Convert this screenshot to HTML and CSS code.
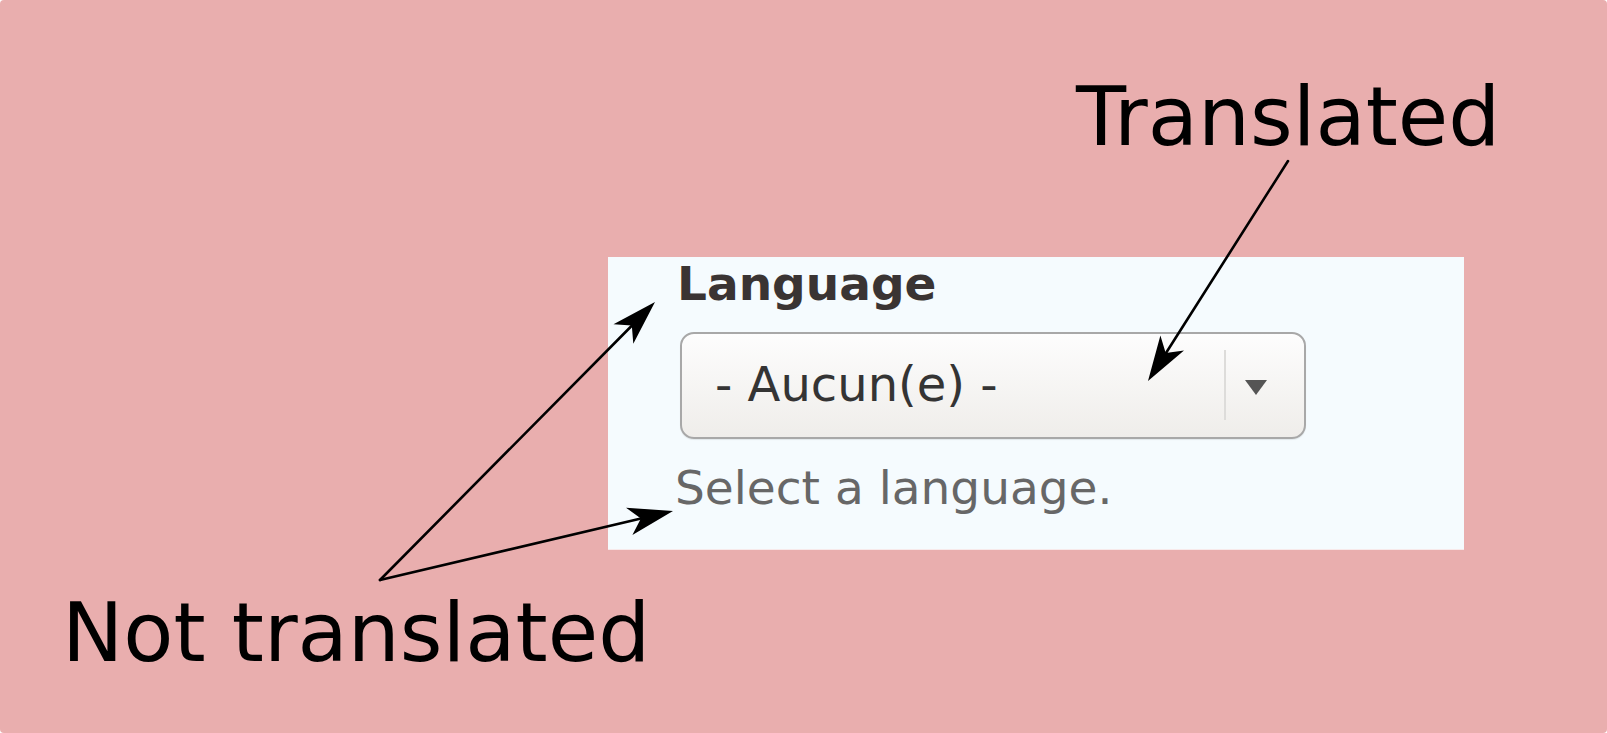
FILE: index.html
```html
<!DOCTYPE html>
<html>
<head>
<meta charset="utf-8">
<link rel="stylesheet" href="styles.css">
</head>
<body>
<div class="canvas">
  <div class="panel">
    <div class="label">Language</div>
    <div class="select">
      <span class="select-value">- Aucun(e) -</span>
      <span class="select-sep"></span>
      <span class="select-arrow"></span>
    </div>
    <div class="desc">Select a language.</div>
  </div>
  <div class="note note-translated">Translated</div>
  <div class="note note-not">Not translated</div>
  <svg class="arrows" width="1607" height="733" viewBox="0 0 1607 733">
    <g stroke="#000" stroke-width="2.6" fill="none" stroke-linecap="round">
      <line x1="1288" y1="161" x2="1166" y2="353"/>
      <line x1="380" y1="580" x2="632" y2="325.5"/>
      <line x1="380" y1="580" x2="641" y2="518.6"/>
    </g>
    <g fill="#000">
      <path d="M1148 381 L1160.4 335.5 L1165.7 353.1 L1184 350.5 Z"/>
      <path d="M655 302 L613.5 324.2 L631.8 325.5 L633.3 343.8 Z"/>
      <path d="M673 511 L626 507.7 L640.9 518.6 L632.4 534.9 Z"/>
    </g>
  </svg>
</div>
</body>
</html>
```

FILE: styles.css
```css
html, body {
  margin: 0;
  padding: 0;
  background: #ffffff;
}

.canvas {
  position: relative;
  width: 1607px;
  height: 733px;
  background: #e9aeae;
  border-radius: 4px;
  overflow: hidden;
  box-sizing: border-box;
  padding: 257px 0 0 608px;
  font-family: "DejaVu Sans", sans-serif;
}

.panel {
  width: 856px;
  height: 293px;
  box-sizing: border-box;
  background: #f5fbfe;
  padding: 0 0 0 67px;
  display: flex;
  flex-direction: column;
  align-items: flex-start;
  border-bottom: 1px solid #f7e9ea;
}

.label {
  font-size: 47px;
  font-weight: bold;
  color: #3a3433;
  line-height: 1.164;
  margin-left: 2px;
}

.select {
  margin-top: 20px;
  margin-left: 5px;
  width: 626px;
  height: 107px;
  box-sizing: border-box;
  border: 2px solid #a8a8a8;
  border-radius: 14px;
  background: linear-gradient(#fdfdfd, #efedea);
  display: flex;
  align-items: center;
  box-shadow: 0 1px 1px rgba(0,0,0,0.08);
}

.select-value {
  flex: 1;
  padding-left: 33px;
  font-size: 48px;
  line-height: 1.164;
  color: #343434;
}

.select-sep {
  width: 2px;
  height: 70px;
  background: #dddcda;
}

.select-arrow {
  width: 78px;
  display: flex;
  justify-content: center;
}

.select-arrow::before {
  content: "";
  display: block;
  width: 0;
  height: 0;
  margin-right: 18px;
  margin-top: 4px;
  border-left: 11px solid transparent;
  border-right: 11px solid transparent;
  border-top: 15px solid #555;
}

.desc {
  margin-top: 22px;
  font-size: 47px;
  line-height: 1.164;
  color: #676767;
}

.note {
  position: absolute;
  font-size: 82px;
  line-height: 1.164;
  color: #000;
  white-space: nowrap;
}

.note-translated {
  left: 1076px;
  top: 69px;
}

.note-not {
  left: 62px;
  top: 585px;
}

.arrows {
  position: absolute;
  left: 0;
  top: 0;
  pointer-events: none;
}
```
